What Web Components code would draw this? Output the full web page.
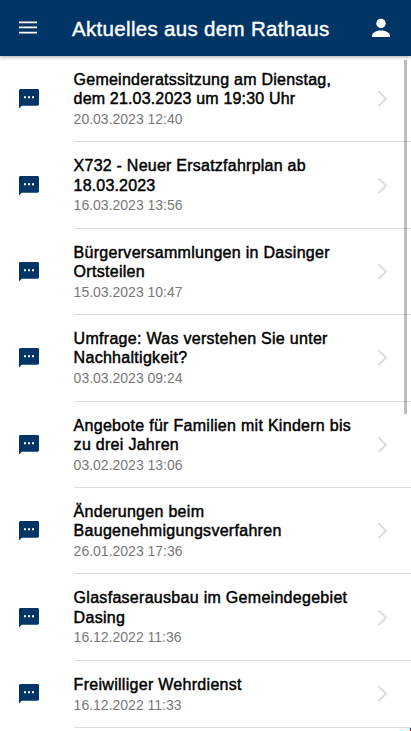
<!DOCTYPE html>
<html lang="de">
<head>
  <meta charset="UTF-8">
  <meta name="viewport" content="width=device-width, initial-scale=1">
  <title>Aktuelles aus dem Rathaus</title>
  <style>
    body {
      margin: 0;
      height: 731px;
      overflow: hidden;
      background: #fff;
      font-family: "Liberation Sans", Arial, sans-serif;
    }
  </style>
</head>
<body>
  <news-app>
    <app-header slot="header">Aktuelles aus dem Rathaus</app-header>
    <news-item figures date="20.03.2023 12:40">Gemeinderatssitzung am Dienstag, dem 21.03.2023 um 19:30 Uhr</news-item>
    <news-item figures date="16.03.2023 13:56">X732 - Neuer Ersatzfahrplan ab 18.03.2023</news-item>
    <news-item date="15.03.2023 10:47">Bürgerversammlungen in Dasinger Ortsteilen</news-item>
    <news-item date="03.03.2023 09:24">Umfrage: Was verstehen Sie unter Nachhaltigkeit?</news-item>
    <news-item date="03.02.2023 13:06">Angebote für Familien mit Kindern bis zu drei Jahren</news-item>
    <news-item date="26.01.2023 17:36">Änderungen beim Baugenehmigungsverfahren</news-item>
    <news-item date="16.12.2022 11:36">Glasfaserausbau im Gemeindegebiet Dasing</news-item>
    <news-item date="16.12.2022 11:33">Freiwilliger Wehrdienst</news-item>
  </news-app>

  <script>
    class NewsApp extends HTMLElement {
      constructor() {
        super()
        this.attachShadow({ mode: "open" })
        this.shadowRoot.innerHTML = `
          <style>
            :host {
              display: flex;
              flex-direction: column;
              position: relative;
              height: 731px;
              overflow: hidden;
            }

            .list {
              flex: 1;
              min-height: 0;
            }

            .scrollbar {
              position: absolute;
              top: 60px;
              right: 4px;
              width: 3px;
              height: 354px;
              background: rgba(0, 0, 0, 0.26);
            }

            .corner {
              position: absolute;
              right: 0;
              bottom: 0;
              width: 1px;
              height: 3px;
              background: linear-gradient(#00f 33%, #080 33% 66%, #f00 66%);
            }
          </style>
          <slot name="header"></slot>
          <div class="list"><slot></slot></div>
          <div class="scrollbar"></div>
          <div class="corner"></div>
        `
      }
    }

    class AppHeader extends HTMLElement {
      constructor() {
        super()
        this.attachShadow({ mode: "open" })
        this.shadowRoot.innerHTML = `
          <style>
            :host {
              display: flex;
              align-items: center;
              flex: none;
              box-sizing: border-box;
              height: 56px;
              padding: 0 18px;
              background: #003566;
              color: #fff;
              box-shadow: 0 1px 4px rgba(0, 0, 0, 0.35);
              z-index: 1;
            }

            svg {
              display: block;
              flex: none;
            }

            .title {
              flex: 1;
              padding: 2px 0 0 34px;
              font-size: 20.5px;
              line-height: 24px;
              letter-spacing: 0.32px;
              white-space: nowrap;
              -webkit-text-stroke: 0.4px #fff;
            }
          </style>
          <svg width="20" height="20" viewBox="0 0 20 20" stroke="#fff" stroke-width="1.7">
            <path d="M1 4.3h18M1 9.4h18M1 14.6h18"/>
          </svg>
          <div class="title"><slot></slot></div>
          <svg width="24" height="24" viewBox="0 0 24 24" fill="#fff">
            <circle cx="12" cy="7.4" r="4.7"/>
            <path d="M3 21v-1.2c0-3.2 4.6-5.2 9-5.2s9 2 9 5.2V21z"/>
          </svg>
        `
      }
    }

    class NewsItem extends HTMLElement {
      constructor() {
        super()
        this.attachShadow({ mode: "open" })
        this.render()
      }

      render() {
        this.shadowRoot.innerHTML = `
          <style>
            :host {
              display: flex;
              align-items: stretch;
              padding-left: 17px;
            }

            svg {
              display: block;
              flex: none;
            }

            .icon {
              align-self: center;
              width: 24px;
              height: 24px;
              margin-right: 32.6px;
            }

            .body {
              flex: 1;
              display: flex;
              align-items: center;
              box-sizing: border-box;
              padding: 14px 23px 13px 0;
              border-bottom: 1px solid #dedede;
            }

            .text {
              flex: 1;
              padding-right: 13px;
            }

            .title {
              font-size: 16px;
              line-height: 19.2px;
              letter-spacing: 0.29px;
              color: #000;
              -webkit-text-stroke: 0.45px #000;
            }

            /* lines with figures run wide, so they are set tighter */
            :host([figures]) .title {
              letter-spacing: 0.17px;
            }

            :host([figures]) .title::first-line {
              letter-spacing: 0.24px;
            }

            .date {
              margin-top: 2.7px;
              font-size: 14px;
              line-height: 17.3px;
              color: #787878;
            }
          </style>
          <svg class="icon" viewBox="0 0 24 24">
            <path fill="#003566" d="M20.6 2H3.4C2.6 2 2 2.6 2 3.4v18.2l2.8-2.900h15.800c.8 0 1.400-.6 1.400-1.400V3.400c0-.8-.6-1.400-1.400-1.400z"/>
            <path fill="#fff" d="M7 9.2h2v2H7zM11 9.2h2v2h-2zM15 9.2h2v2h-2z"/>
          </svg>
          <div class="body">
            <div class="text">
              <div class="title"><slot></slot></div>
              <div class="date">${this.getAttribute("date")}</div>
            </div>
            <svg width="11" height="18" viewBox="0 0 11 18" fill="none" stroke="#dcdcdc" stroke-width="2">
              <path d="M1.5 1.4l7.5 7.3-7.5 7.3"/>
            </svg>
          </div>
        `
      }
    }

    customElements.define("news-app", NewsApp)
    customElements.define("app-header", AppHeader)
    customElements.define("news-item", NewsItem)
  </script>
</body>
</html>
